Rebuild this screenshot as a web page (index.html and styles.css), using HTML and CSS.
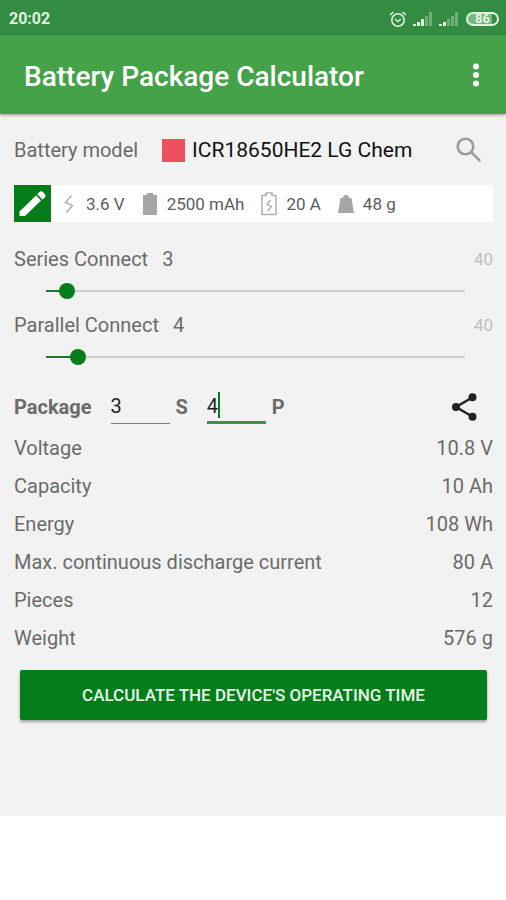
FILE: index.html
```html
<!DOCTYPE html>
<html lang="en">
<head>
<meta charset="utf-8">
<meta name="viewport" content="width=device-width, initial-scale=1">
<title>Battery Package Calculator</title>
<link rel="stylesheet" href="styles.css">
</head>
<body>
<div class="status">
  <span class="time">20:02</span>
  <svg class="alarm" viewBox="0 0 18 18" width="18" height="18" fill="none" stroke="currentColor" stroke-width="1.6"><circle cx="9" cy="10" r="6.2"/><path d="M6 9l3 2.5L12 9M1 5l3.5-3M17 5l-3.5-3"/></svg>
  <svg class="signal" viewBox="0 0 20 14" width="20" height="14" fill="currentColor"><path d="M0 12h3v2H0zM4 10h3v4H4zM8 7h3v7H8z"/><path opacity=".35" d="M12 4h3v10h-3zM16 0h3v14h-3z"/></svg>
  <svg class="signal" viewBox="0 0 20 14" width="20" height="14" fill="currentColor"><path d="M0 12h3v2H0zM4 10h3v4H4z"/><path opacity=".35" d="M8 7h3v7H8zM12 4h3v10h-3zM16 0h3v14h-3z"/></svg>
  <span class="charge">86</span>
</div>
<header class="appbar">
  <h1>Battery Package Calculator</h1>
  <button class="icon-button" type="button" aria-label="More options">
    <svg viewBox="0 0 8 24" width="8" height="24" fill="#fff"><circle cx="4" cy="3.5" r="3"/><circle cx="4" cy="12" r="3"/><circle cx="4" cy="20.5" r="3"/></svg>
  </button>
</header>
<main>
  <div class="model">
    <span class="label">Battery model</span>
    <span class="swatch"></span>
    <span class="name">ICR18650HE2 LG Chem</span>
    <button class="icon-button search" type="button" aria-label="Search">
      <svg viewBox="0 0 26 26" width="26" height="26" fill="none" stroke="#9c9c9c" stroke-width="2.6"><circle cx="9.5" cy="9.5" r="7.8"/><path d="M15.2 15.2l9 9"/></svg>
    </button>
  </div>
  <div class="specs">
    <button class="edit" type="button" aria-label="Edit battery">
      <svg viewBox="0 0 37 37" width="37" height="37" fill="#fff"><path d="M5.5 26.5V31H11L27 15.5l-5-5z"/><path d="M23.2 9.3l2.5-2.5q1.5-1.2 3 0l2.3 2.5q1.2 1.5 0 3l-2.6 2.3z"/></svg>
    </button>
    <span class="spec"><svg viewBox="0 0 18 24" width="18" height="24" fill="none" stroke="#b0b0b0" stroke-width="1.5"><path d="M11.5 3.5L5.5 10.5l7 3L6.5 20.5"/></svg>3.6 V</span>
    <span class="spec"><svg viewBox="0 0 18 24" width="18" height="24" fill="#a6a6a6"><path d="M2 3h4V1h6v2h4v20H2z"/></svg>2500 mAh</span>
    <span class="spec"><svg viewBox="0 0 18 24" width="18" height="24" fill="none" stroke="#b0b0b0" stroke-width="1.5"><path d="M2 3.5h4V1h6v2.5h4v19H2z"/><path d="M10.5 8L7 12.5l4.500 2L7.500 19"/></svg>20 A</span>
    <span class="spec"><svg viewBox="0 0 18 24" width="18" height="24" fill="#a6a6a6"><path d="M3.500 6H6a3 3 0 0 1 6 0h2.500L17 21H1z"/></svg>48 g</span>
  </div>
  <div class="connect">
    <label for="series">Series Connect</label>
    <output for="series">3</output>
    <span class="max">40</span>
    <input id="series" type="range" min="1" max="40" value="3" style="--fill: 0.0513">
  </div>
  <div class="connect">
    <label for="parallel">Parallel Connect</label>
    <output for="parallel">4</output>
    <span class="max">40</span>
    <input id="parallel" type="range" min="1" max="40" value="4" style="--fill: 0.0769">
  </div>
  <div class="package">
    <span class="title">Package</span>
    <input id="s" type="text" inputmode="numeric" value="3">
    <label for="s">S</label>
    <span class="field">
      <input id="p" class="active" type="text" inputmode="numeric" value="4">
      <span class="caret"></span>
    </span>
    <label for="p">P</label>
    <button class="icon-button share" type="button" aria-label="Share">
      <svg viewBox="0 0 28 30" width="28" height="30" fill="#212121"><path d="M23 5L6 15l17 10" fill="none" stroke="#212121" stroke-width="2.4"/><circle cx="22.5" cy="5.2" r="4"/><circle cx="6" cy="15" r="4"/><circle cx="22.5" cy="24.8" r="4"/></svg>
    </button>
  </div>
  <dl class="results">
    <div><dt>Voltage</dt><dd>10.8 V</dd></div>
    <div><dt>Capacity</dt><dd>10 Ah</dd></div>
    <div><dt>Energy</dt><dd>108 Wh</dd></div>
    <div><dt>Max. continuous discharge current</dt><dd>80 A</dd></div>
    <div><dt>Pieces</dt><dd>12</dd></div>
    <div><dt>Weight</dt><dd>576 g</dd></div>
  </dl>
  <button class="calculate" type="button">CALCULATE THE DEVICE'S OPERATING TIME</button>
</main>
</body>
</html>
```
FILE: styles.css
```css
* { box-sizing: border-box; }

body {
  margin: 0;
  background: #fff;
  color: #6b6b6b;
  font: 20px/24px Roboto, sans-serif;
}

button, input { font: inherit; }

button {
  border: 0;
  padding: 0;
  background: none;
}

svg { display: block; }

.status {
  display: flex;
  align-items: center;
  gap: 5px;
  height: 35px;
  padding: 2px 7px 0 9px;
  background: #338c42;
  color: #e0f3df;
}

.time {
  margin-right: auto;
  font-size: 16px;
  font-weight: 700;
}

.signal { margin-left: 1px; }

.charge {
  width: 33px;
  height: 14px;
  margin-left: 2px;
  border: 2px solid;
  border-radius: 7px;
  background: linear-gradient(90deg, #7ab781 82%, transparent 82%);
  font-size: 13px;
  font-weight: 700;
  line-height: 10px;
  text-align: center;
}

.appbar {
  position: relative;
  display: flex;
  align-items: center;
  justify-content: space-between;
  height: 79px;
  padding: 4px 14px 0 24px;
  background: #44a248;
  box-shadow: 0 1px 3px rgba(0, 0, 0, .4);
}

h1 {
  margin: 0;
  color: #fff;
  font-size: 28px;
  font-weight: 500;
  line-height: 36px;
}

.icon-button {
  display: flex;
  align-items: center;
  justify-content: center;
  width: 32px;
  height: 36px;
}

.appbar .icon-button { padding-bottom: 4px; }

main {
  padding: 18px 13px 96px 14px;
  background: #f2f2f2;
}

.model {
  display: flex;
  align-items: center;
  height: 36px;
  margin-bottom: 17px;
}

.swatch {
  width: 23px;
  height: 23px;
  margin: 0 7px 0 24px;
  background: #ee5060;
}

.name {
  color: #111;
  font-size: 21px;
}

.search { margin: 0 8px 0 auto; }

.specs {
  display: flex;
  align-items: center;
  gap: 16px;
  height: 37px;
  margin-bottom: 20px;
  background: #fff;
  color: #5c5c5c;
  font-size: 17px;
}

.edit {
  width: 37px;
  height: 37px;
  margin-right: -7px;
  background: #047d1a;
}

.spec {
  display: flex;
  align-items: center;
  gap: 8px;
}

.connect {
  display: flex;
  flex-wrap: wrap;
  align-content: flex-start;
  align-items: center;
  row-gap: 11px;
  height: 66px;
  padding-top: 5px;
}

.connect output { margin-left: 14px; }

.max {
  margin-left: auto;
  color: #c0c0c0;
  font-size: 17px;
}

input[type="range"] {
  appearance: none;
  flex: 1 0 calc(100% - 48px);
  height: 18px;
  margin: 0 20px 0 24px;
  background:
    linear-gradient(#1a7a2a, #1a7a2a) 8px center / calc((100% - 16px) * var(--fill)) 2px no-repeat,
    linear-gradient(#cecece, #cecece) center / calc(100% - 16px) 2px no-repeat;
}

input[type="range"]::-webkit-slider-thumb {
  appearance: none;
  width: 16px;
  height: 16px;
  border-radius: 50%;
  background: #047d1a;
}

.package {
  display: flex;
  align-items: center;
  height: 43px;
  margin: 11px 0 1px;
}

.title, .package label { font-weight: 700; }

.title { margin-right: 19px; }

.package label { margin: 0 19px 0 6px; }

.package input {
  width: 59px;
  height: 34px;
  border: 0;
  border-bottom: 1px solid #808080;
  padding: 0;
  background: none;
  color: #222;
  outline: 0;
}

.field {
  position: relative;
  display: flex;
}

.package .active {
  border-bottom: 3px solid #3f9150;
  padding-top: 2px;
}

.caret {
  position: absolute;
  top: 2px;
  left: 11px;
  width: 2px;
  height: 26px;
  background: #047d1a;
}

.package .share { margin: 0 13px 0 auto; }

.results { margin: 0 0 13px; }

.results div {
  display: flex;
  align-items: center;
  justify-content: space-between;
  height: 38px;
}

dd { margin: 0; }

.calculate {
  display: block;
  width: calc(100% - 12px);
  height: 50px;
  margin: 0 6px;
  border-radius: 2px;
  background: #047d1a;
  box-shadow: 0 2px 3px rgba(0, 0, 0, .35);
  color: #e8f8e8;
  font-size: 17px;
  font-weight: 500;
}
```
